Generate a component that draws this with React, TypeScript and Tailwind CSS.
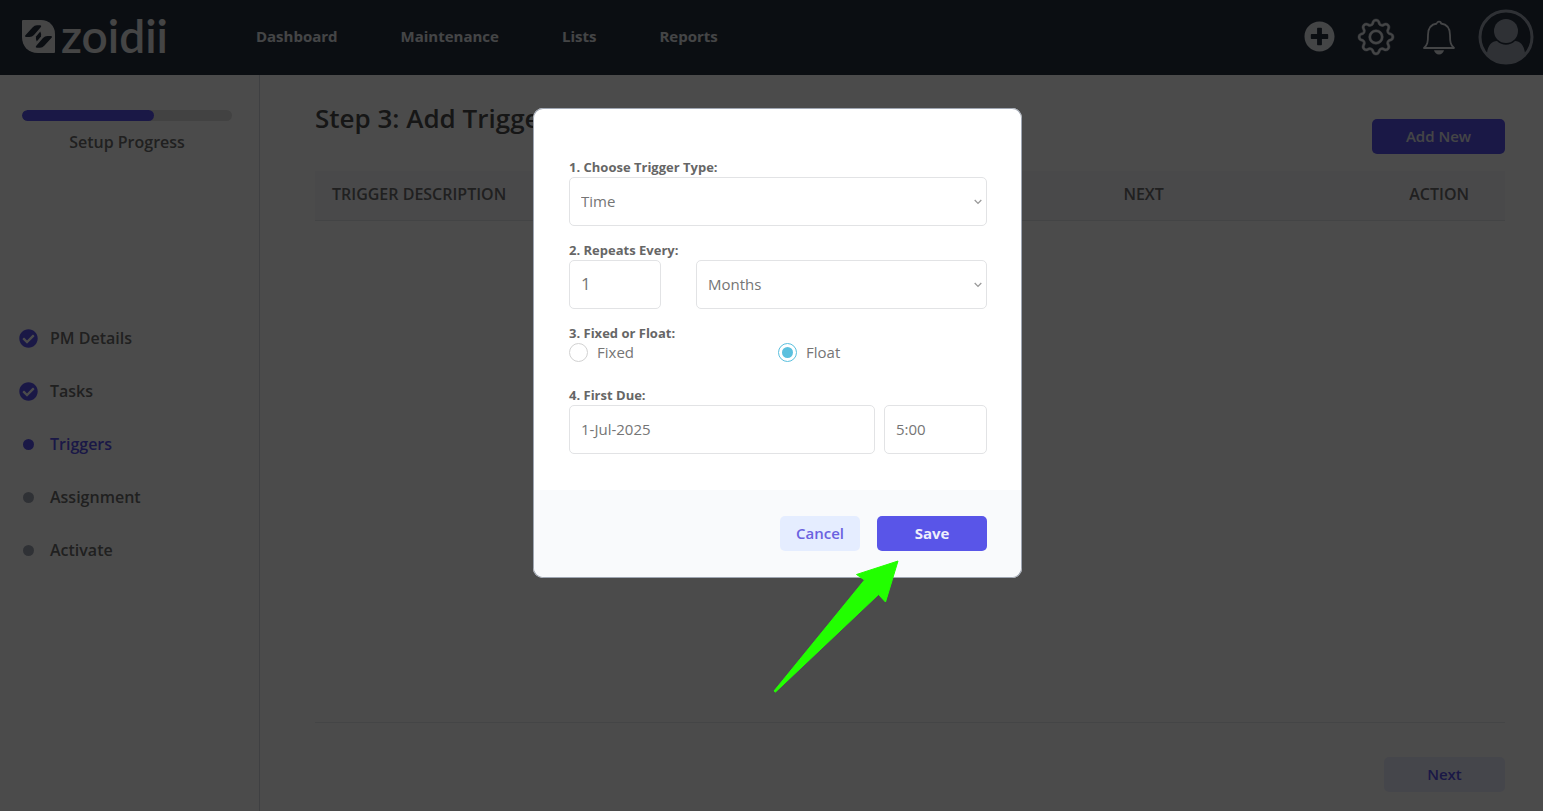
import React from "react";
import { BsGear } from "react-icons/bs";
import { FaPlusCircle, FaCheckCircle } from "react-icons/fa";

const NAV = ["Dashboard", "Maintenance", "Lists", "Reports"];

type StepState = "done" | "current" | "todo";
const STEPS: { name: string; state: StepState }[] = [
  { name: "PM Details", state: "done" },
  { name: "Tasks", state: "done" },
  { name: "Triggers", state: "current" },
  { name: "Assignment", state: "todo" },
  { name: "Activate", state: "todo" },
];

function Logo() {
  return (
    <a href="#home" className="flex items-center gap-1.5 text-[#e8e8e8]" aria-label="zoidii">
      <svg width="33" height="33" viewBox="0 0 33 33" aria-hidden="true">
        <path d="M1 0H19C27 0 33 6 33 14V32Q33 33 32 33H16C6 33 0 26 0 17V1Q0 0 1 0Z" fill="currentColor" />
        <g fill="#252f3f">
          <path d="M3.200 15.500L10.500 7.500Q12.500 5.300 15 5.300H18Q20 5.500 18.700 7.300L12 15Q10.200 17 7.500 17H4Q2.500 16.800 3.200 15.500Z" />
          <path d="M29.800 17.500L22.500 25.500Q20.500 27.700 18 27.700H15Q13 27.500 14.300 25.700L21 18Q22.800 16 25.500 16H29Q30.500 16.200 29.800 17.500Z" />
          <path d="M18.300 11.500L14 16.500Q13.500 19.500 14.700 21.500L19 16.500Q19.500 13.500 18.300 11.500Z" />
        </g>
      </svg>
      <span className="pb-0.5 font-['Lato',sans-serif] text-[46px] font-semibold leading-none">zoidii</span>
    </a>
  );
}

function BellIcon() {
  return (
    <svg width="34" height="36" viewBox="0 0 34 36" fill="none" stroke="currentColor" strokeWidth="1.8" strokeLinejoin="round" aria-hidden="true">
      <path d="M15 4.500C15 2 19 2 19 4.500C25.500 5.300 28 10 28 16C28 23 28.500 26 32 29H2C5.500 26 6 23 6 16C6 10 8.500 5.300 15 4.500" />
      <path d="M12 31.300H22C21.300 34 19.500 35.500 17 35.500S12.700 34 12 31.300Z" fill="currentColor" stroke="none" />
    </svg>
  );
}

function AvatarIcon() {
  return (
    <svg width="56" height="56" viewBox="0 0 56 56" className="text-[#9fa6b2]" aria-hidden="true">
      <circle cx="28" cy="28" r="26" fill="none" stroke="currentColor" strokeWidth="3" />
      <circle cx="28" cy="22" r="12" fill="currentColor" />
      <path d="M9 44C10 36 14 32 19 32C24 37 32 37 37 32C42 32 46 36 47 44C42 51 35 54 28 54S14 51 9 44Z" fill="currentColor" />
    </svg>
  );
}

function Header() {
  return (
    <header className="flex h-[75px] items-center bg-[#252f3f] pb-0.5 pl-[22px] pr-[9px]">
      <Logo />
      <nav className="ml-[88px] flex flex-1 gap-[63px] text-[15px] font-bold text-[#e5e7eb]">
        {NAV.map((item) => (
          <a key={item} href={`#${item.toLowerCase()}`}>{item}</a>
        ))}
      </nav>
      <div className="flex items-center text-[#e5e7eb]">
        <button type="button" aria-label="Add" className="mr-[23px]"><FaPlusCircle size={31} /></button>
        <button type="button" aria-label="Settings" className="mr-7"><BsGear size={36} stroke="currentColor" strokeWidth="0.2" className="overflow-visible" /></button>
        <button type="button" aria-label="Notifications" className="mr-[22px]"><BellIcon /></button>
        <button type="button" aria-label="Account"><AvatarIcon /></button>
      </div>
    </header>
  );
}

function StepMarker({ state }: { state: StepState }) {
  if (state === "done") return <FaCheckCircle size={19} className="text-[#5850ec]" aria-hidden="true" />;
  if (state === "current") return <span className="size-[11px] rounded-full bg-[#5850ec]" />;
  return <span className="size-[11px] rounded-full bg-[#9fa6b2]" />;
}

function Sidebar() {
  return (
    <aside className="w-[260px] shrink-0 border-r border-[#d2d6dc] text-base font-semibold text-[#6b6b6b]">
      <div className="px-[22px] pt-[35px]">
        <div role="progressbar" aria-label="Setup Progress" aria-valuenow={63} className="h-[11px] w-[210px] overflow-hidden rounded-full bg-[#dcdcdc]">
          <div className="h-full w-[63%] rounded-full bg-[#5850ec]" />
        </div>
        <p className="mt-1.5 w-[210px] text-center leading-[30px]">Setup Progress</p>
      </div>
      <ol className="mt-[169px] flex flex-col gap-[29px] pl-[19px] leading-6">
        {STEPS.map((step) => (
          <li key={step.name}>
            <a href="#step" className={step.state === "current" ? "flex items-center gap-3 text-[#5850ec]" : "flex items-center gap-3"}>
              <span className="flex w-[19px] justify-center"><StepMarker state={step.state} /></span>
              {step.name}
            </a>
          </li>
        ))}
      </ol>
    </aside>
  );
}

function Content() {
  return (
    <main className="flex flex-1 flex-col pb-[19px] pl-[55px] pr-[38px] pt-[25px] text-[15px]">
      <div className="flex h-[71px] items-start justify-between">
        <h1 className="text-[26px] font-semibold leading-[36px] text-[#4b4b4b]">Step 3: Add Triggers</h1>
        <button type="button" className="mt-[19px] h-[35px] w-[133px] rounded-[5px] bg-[#5850ec] font-semibold text-[#e5e7eb]">Add New</button>
      </div>
      <div className="flex-1 border-b border-[#e5e7eb]">
        <table className="w-full table-fixed text-left text-base">
          <thead>
            <tr className="h-[49px] border-b border-[#e2e3e6] bg-[#f3f3f8] text-[#6b6b6b]">
              <th className="w-[66%] px-[17px] pb-0.5 font-semibold">TRIGGER DESCRIPTION</th>
              <th className="px-[23px] pb-0.5 font-semibold">NEXT</th>
              <th className="px-9 pb-0.5 text-right font-semibold">ACTION</th>
            </tr>
          </thead>
        </table>
      </div>
      <button type="button" className="mt-[34px] h-[35px] w-[121px] self-end rounded-[5px] bg-[#e8eafa] font-semibold text-[#5850ec]">Next</button>
    </main>
  );
}

const FIELD_BOX = "h-[49px] w-full rounded-[5px] border border-[#e2e3e5] bg-white px-[11px] text-[#757575] outline-none";
const FIELD = `${FIELD_BOX} pb-0.5 text-[15px]`;
const LABEL = "block text-[13px] font-bold leading-5 text-[#666666]";

function SelectField({ id, label, value }: { id: string; label?: string; value: string }) {
  return (
    <div className="relative">
      <select id={id} aria-label={label} defaultValue={value} className={`${FIELD_BOX} appearance-none text-[15px]`}>
        <option>{value}</option>
      </select>
      <svg width="8" height="6" viewBox="0 0 8 6" fill="none" stroke="#9a9a9a" strokeWidth="1.3" className="pointer-events-none absolute right-[5px] top-[22px]" aria-hidden="true">
        <path d="M0.700 1L4 4.400L7.300 1" />
      </svg>
    </div>
  );
}

function RadioField({ label, checked }: { label: string; checked?: boolean }) {
  return (
    <label className="flex h-5 items-center gap-[9px]">
      <input
        type="radio"
        name="schedule"
        defaultChecked={checked}
        className="size-[19px] appearance-none rounded-full border border-[#d2d2d2] bg-white bg-clip-content p-[3px] checked:border-[#5bc0de] checked:bg-[#5bc0de]"
      />
      {label}
    </label>
  );
}

function PointerArrow() {
  return (
    <svg width="126" height="134" viewBox="0 0 126 134" className="pointer-events-none absolute left-[240px] top-[451px]" aria-hidden="true">
      <path d="M125 2L83.500 15.500L91.500 21L1 132L2.500 133L105.500 35.500L112.500 43Z" fill="#22ff00" stroke="#22ff00" strokeLinejoin="round" />
    </svg>
  );
}

function TriggerDialog() {
  return (
    <div className="fixed inset-0 flex items-start justify-center bg-black/70 pl-3 pt-[108px]">
      <form role="dialog" aria-label="Add trigger" className="relative w-[489px] rounded-[10px] bg-white text-[15px] text-[#757575] ring-1 ring-inset ring-[#9fa6b2]" onSubmit={(e) => e.preventDefault()}>
        <div className="pb-9 pl-9 pr-[35px] pt-[49px]">
          <label htmlFor="type" className={LABEL}>1. Choose Trigger Type:</label>
          <SelectField id="type" value="Time" />
          <label htmlFor="count" className={`${LABEL} mt-3.5`}>2. Repeats Every:</label>
          <div className="flex gap-[35px]">
            <div className="w-[92px]"><input id="count" defaultValue="1" className={`${FIELD_BOX} pb-0.5 text-[17px]`} /></div>
            <div className="flex-1"><SelectField id="unit" label="Repeat unit" value="Months" /></div>
          </div>
          <fieldset className="mt-3.5">
            <legend className={LABEL}>3. Fixed or Float:</legend>
            <div className="-mt-px mb-px grid grid-cols-2">
              <RadioField label="Fixed" />
              <RadioField label="Float" checked />
            </div>
          </fieldset>
          <label htmlFor="due" className={`${LABEL} mt-[22px]`}>4. First Due:</label>
          <div className="flex gap-[9px]">
            <div className="flex-1"><input id="due" defaultValue="1-Jul-2025" className={FIELD} /></div>
            <div className="w-[103px]"><input aria-label="First due time" defaultValue="5:00" className={FIELD} /></div>
          </div>
        </div>
        <div className="mx-px mb-px flex justify-end gap-[17px] rounded-b-[10px] bg-[#f9fafc] px-[34px] py-[26px] font-semibold">
          <button type="button" className="h-[35px] w-20 rounded-[5px] bg-[#e5edff] text-[#6a62e0]">Cancel</button>
          <button type="submit" className="h-[35px] w-[110px] rounded-[5px] bg-[#5955e8] font-bold text-[#eeeefc]">Save</button>
        </div>
        <PointerArrow />
      </form>
    </div>
  );
}

export default function App() {
  return (
    <div className="flex min-h-screen flex-col bg-[#fcfcfc] font-['Open_Sans','Noto_Sans',sans-serif]">
      <Header />
      <div className="flex flex-1">
        <Sidebar />
        <Content />
      </div>
      <TriggerDialog />
    </div>
  );
}
